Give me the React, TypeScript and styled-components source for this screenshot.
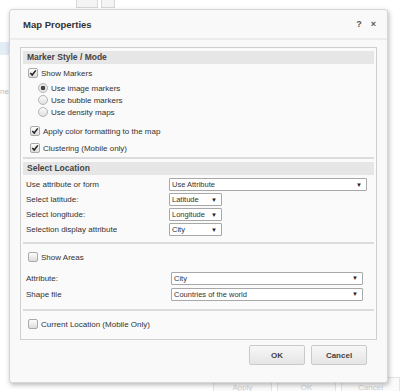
import styled, { createGlobalStyle } from "styled-components";

const GlobalStyle = createGlobalStyle`
  html, body {
    margin: 0;
    padding: 0;
    background: #ffffff;
  }
  body {
    font-family: "Liberation Sans", "DejaVu Sans", sans-serif;
  }
`;

const Page = styled.div`
  position: relative;
  width: 400px;
  height: 391px;
  overflow: hidden;
  background: #ffffff;
`;

const BackTop = styled.div`
  display: flex;
  gap: 3px;
  padding: 0 0 0 76px;
  height: 9px;
`;

const BackTab = styled.div<{ $w: number }>`
  width: ${(p) => p.$w}px;
  height: 7px;
  border: 1px solid #d8d8d8;
  border-top: none;
  background: #f4f4f4;
`;

const BackSide = styled.div`
  display: flex;
  flex-direction: column;
  width: 9px;
  padding-top: 33px;
`;

const BackRow = styled.div<{ $sel?: boolean }>`
  height: 13px;
  background: ${(p) => (p.$sel ? "#e4ecf6" : "transparent")};
  font-size: 8px;
  color: #bbb;
  margin-bottom: 32px;
  overflow: hidden;
  white-space: nowrap;
  direction: rtl;
`;

const BackBottom = styled.div`
  position: absolute;
  left: 0;
  right: 0;
  bottom: 0;
  display: flex;
  justify-content: flex-end;
  gap: 5px;
  height: 14px;
`;

const BackButton = styled.div`
  width: 57px;
  height: 16px;
  border: 1px solid #e4e4e4;
  background: #fbfbfb;
  font-size: 8px;
  color: #d0d0d0;
  text-align: center;
  line-height: 20px;
  overflow: hidden;
`;

const Dialog = styled.div`
  position: absolute;
  left: 9px;
  top: 9px;
  width: 377px;
  height: 372px;
  background: #f9f9f9;
  border: 1px solid #d6d6d6;
  border-radius: 3px;
  box-shadow: 1px 2px 5px rgba(0, 0, 0, 0.28);
  display: flex;
  flex-direction: column;
  color: #333;
`;

const TitleBar = styled.div`
  display: flex;
  align-items: center;
  justify-content: space-between;
  height: 28px;
  padding: 0 11px 0 13px;
  border-bottom: 2px solid #ececec;
`;

const Title = styled.div`
  font-size: 9.5px;
  font-weight: bold;
  color: #333;
`;

const TitleIcons = styled.div`
  display: flex;
  gap: 9px;
  font-size: 9px;
  font-weight: bold;
  color: #555;
`;

const Body = styled.div`
  margin: 7px 10px 0 10px;
  border: 1px solid #cfcfcf;
  background: #fafafa;
  padding: 3px 2px 2px 2px;
`;

const SectionHead = styled.div<{ $top?: number }>`
  background: #e6e6e6;
  height: 13px;
  line-height: 13px;
  margin-top: ${(p) => p.$top ?? 0}px;
  padding-left: 4px;
  font-size: 8.5px;
  font-weight: bold;
  color: #444;
`;

const Divider = styled.div<{ $top: number }>`
  border-top: 2px solid #dcdcdc;
  margin-top: ${(p) => p.$top}px;
`;

const Line = styled.label<{ $indent?: number; $h?: number; $top?: number }>`
  display: flex;
  align-items: center;
  gap: 3px;
  height: ${(p) => p.$h ?? 12}px;
  margin-top: ${(p) => p.$top ?? 0}px;
  padding-left: ${(p) => p.$indent ?? 0}px;
  font-size: 8px;
  color: #333;
`;

const Box = styled.span`
  position: relative;
  width: 10px;
  height: 10px;
  box-sizing: border-box;
  border: 1px solid #a9a9a9;
  border-radius: 2px;
  background: linear-gradient(#fdfdfd, #dcdcdc);
  flex: none;
`;

const Radio = styled.span<{ $on?: boolean }>`
  width: 10px;
  height: 10px;
  box-sizing: border-box;
  border: 1px solid #b4b4b4;
  border-radius: 50%;
  background: ${(p) =>
    p.$on
      ? "radial-gradient(circle, #444 0 2px, #eaeaea 2.6px)"
      : "linear-gradient(#fafafa, #e0e0e0)"};
  flex: none;
`;

const FieldRow = styled.div<{ $h?: number; $top?: number }>`
  display: flex;
  align-items: center;
  height: ${(p) => p.$h ?? 15}px;
  margin-top: ${(p) => p.$top ?? 0}px;
  padding-left: 3px;
  font-size: 8px;
  color: #333;
`;

const FieldLabel = styled.div<{ $w: number }>`
  width: ${(p) => p.$w}px;
  flex: none;
`;

const Select = styled.div<{ $w: number }>`
  display: flex;
  align-items: center;
  justify-content: space-between;
  width: ${(p) => p.$w}px;
  height: 13px;
  box-sizing: border-box;
  border: 1px solid #a8a8a8;
  border-radius: 1px;
  background: #fff;
  padding: 0 4px 0 2px;
  font-size: 7.5px;
  color: #333;
`;

const Arrow = styled.span`
  font-size: 6px;
  color: #222;
`;

const Footer = styled.div`
  display: flex;
  justify-content: flex-end;
  gap: 6px;
  padding: 5px 20px 0 0;
`;

const Button = styled.div`
  width: 56px;
  height: 20px;
  box-sizing: border-box;
  border: 1px solid #cacaca;
  border-radius: 2px;
  background: linear-gradient(#f7f7f7, #e5e5e5);
  display: flex;
  align-items: center;
  justify-content: center;
  font-size: 8px;
  font-weight: bold;
  color: #444;
`;

const Check = ({ on }: { on?: boolean }) => (
  <Box>
    {on && (
      <svg width="8" height="8" viewBox="0 0 8 8" style={{ position: "absolute", left: 0, top: 0 }}>
        <path d="M1.3 4 L3.2 6 L6.8 1.4" stroke="#222" strokeWidth="1.5" fill="none" />
      </svg>
    )}
  </Box>
);

const Dropdown = ({ w, value }: { w: number; value: string }) => (
  <Select $w={w}>
    <span>{value}</span>
    <Arrow>▼</Arrow>
  </Select>
);

export default function App() {
  return (
    <Page>
      <GlobalStyle />
      <BackTop>
        <BackTab $w={20} />
        <BackTab $w={12} />
      </BackTop>
      <BackSide>
        <BackRow $sel />
        <BackRow>Line</BackRow>
      </BackSide>
      <BackBottom>
        <BackButton>Apply</BackButton>
        <BackButton>OK</BackButton>
        <BackButton>Cancel</BackButton>
      </BackBottom>

      <Dialog>
        <TitleBar>
          <Title>Map Properties</Title>
          <TitleIcons>
            <span>?</span>
            <span>×</span>
          </TitleIcons>
        </TitleBar>
        <Body>
          <SectionHead>Marker Style / Mode</SectionHead>
          <Line $indent={5} $h={18}>
            <Check on />
            Show Markers
          </Line>
          <Line $indent={15}>
            <Radio $on />
            Use image markers
          </Line>
          <Line $indent={15}>
            <Radio />
            Use bubble markers
          </Line>
          <Line $indent={15}>
            <Radio />
            Use density maps
          </Line>
          <Line $indent={7} $top={7}>
            <Check on />
            Apply color formatting to the map
          </Line>
          <Line $indent={7} $top={5}>
            <Check on />
            Clustering (Mobile only)
          </Line>
          <Divider $top={3} />
          <SectionHead $top={3}>Select Location</SectionHead>
          <FieldRow $top={2}>
            <FieldLabel $w={143}>Use attribute or form</FieldLabel>
            <Dropdown w={198} value="Use Attribute" />
          </FieldRow>
          <FieldRow>
            <FieldLabel $w={143}>Select latitude:</FieldLabel>
            <Dropdown w={53} value="Latitude" />
          </FieldRow>
          <FieldRow>
            <FieldLabel $w={143}>Select longitude:</FieldLabel>
            <Dropdown w={53} value="Longitude" />
          </FieldRow>
          <FieldRow>
            <FieldLabel $w={143}>Selection display attribute</FieldLabel>
            <Dropdown w={53} value="City" />
          </FieldRow>
          <Divider $top={5} />
          <Line $indent={5} $h={26}>
            <Check />
            Show Areas
          </Line>
          <FieldRow $h={16}>
            <FieldLabel $w={145}>Attribute:</FieldLabel>
            <Dropdown w={192} value="City" />
          </FieldRow>
          <FieldRow $h={16}>
            <FieldLabel $w={145}>Shape file</FieldLabel>
            <Dropdown w={192} value="Countries of the world" />
          </FieldRow>
          <Divider $top={7} />
          <Line $indent={5} $h={26}>
            <Check />
            Current Location (Mobile Only)
          </Line>
        </Body>
        <Footer>
          <Button>OK</Button>
          <Button>Cancel</Button>
        </Footer>
      </Dialog>
    </Page>
  );
}
